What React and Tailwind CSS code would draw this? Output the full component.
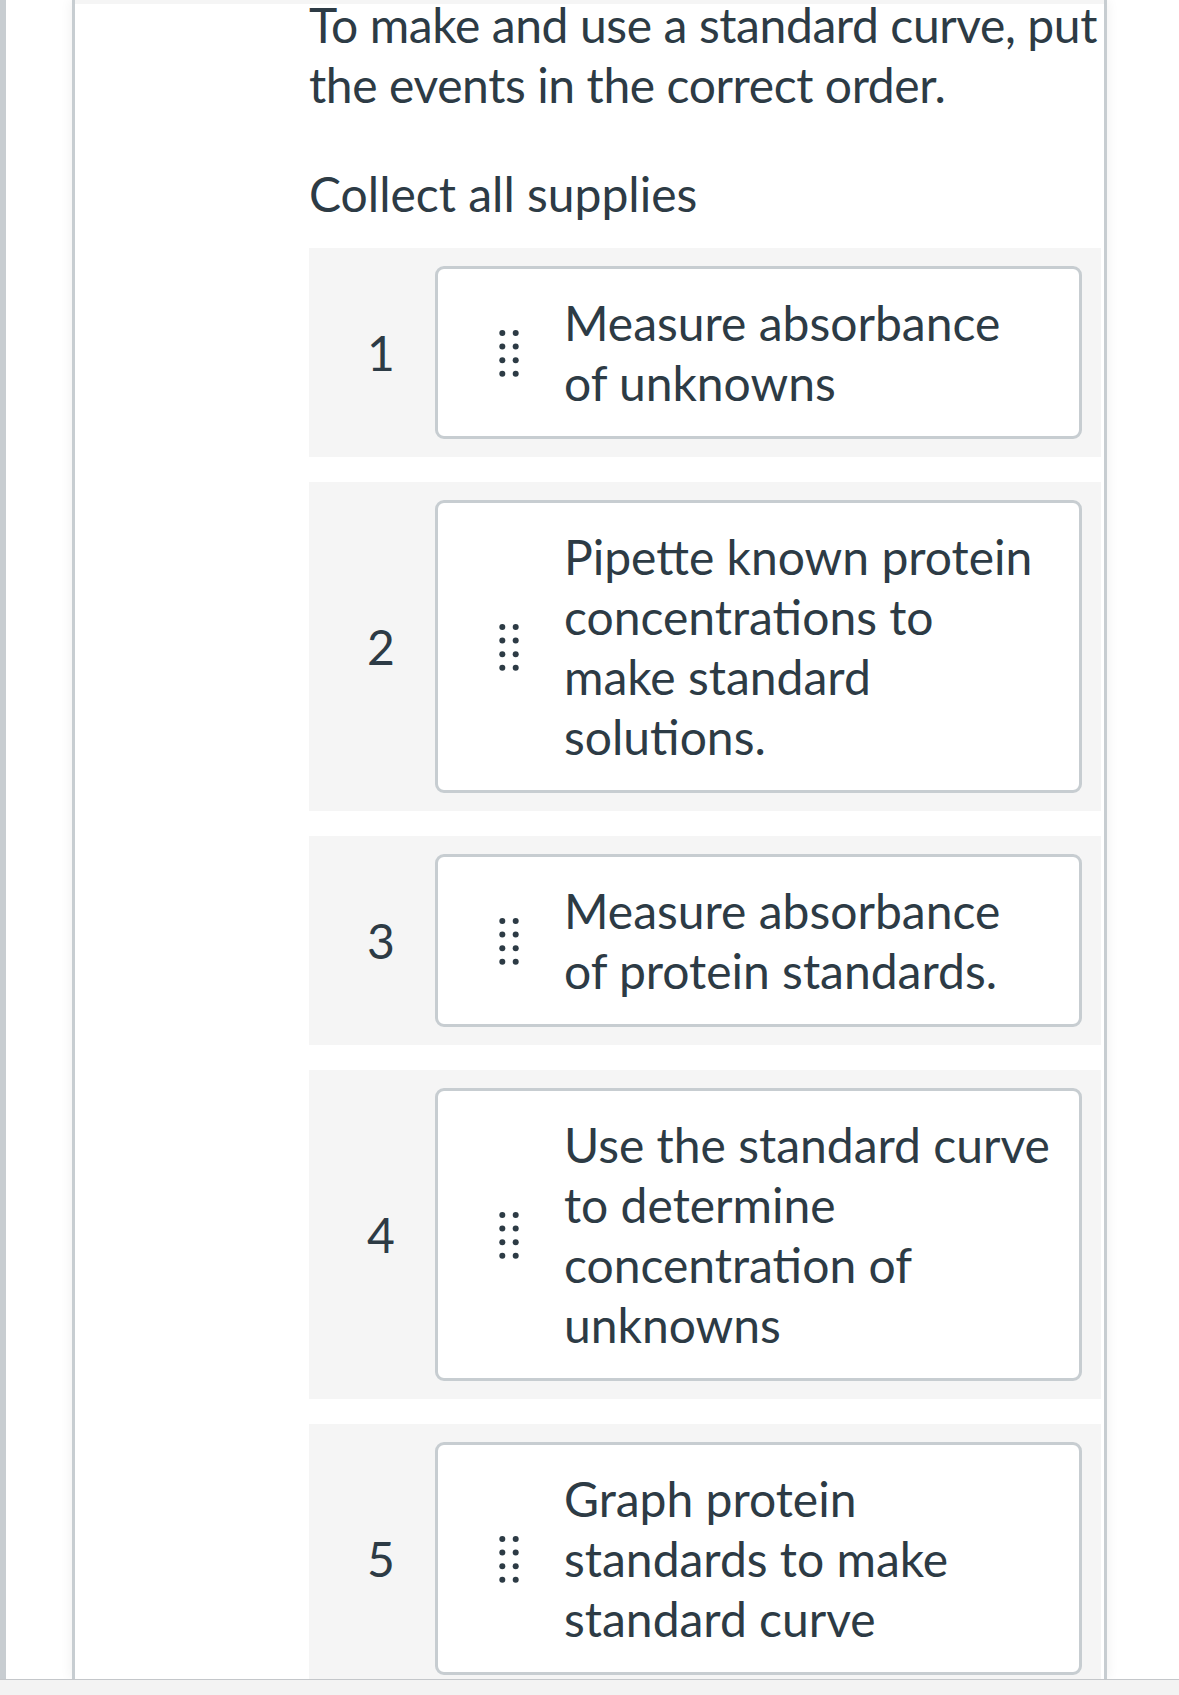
import React from 'react';

const steps = [
  'Measure absorbance of unknowns',
  'Pipette known protein concentrations to make standard solutions.',
  'Measure absorbance of protein standards.',
  'Use the standard curve to determine concentration of unknowns',
  'Graph protein standards to make standard curve',
];

const DragHandle = () => (
  <svg width="20" height="48" viewBox="0 0 20 48" className="shrink-0">
    {[0, 1, 2, 3].map((r) => (
      <g key={r}>
        <circle cx="3.3" cy={4 + r * 13.6} r="3" fill="#2d3b45" />
        <circle cx="16.7" cy={4 + r * 13.6} r="3" fill="#2d3b45" />
      </g>
    ))}
  </svg>
);

const StepRow = ({ index, text }) => (
  <div className="flex items-stretch bg-[#f5f5f5] pl-[18px] pr-[19px] py-[18px]">
    <div className="w-[108px] flex items-center justify-center text-[48px] leading-[60px]">
      {index}
    </div>
    <div className="flex-1 flex items-center border-[3px] border-[#c7cdd1] rounded-[9px] bg-white pl-[61px] pr-[26px] py-[23.5px]">
      <DragHandle />
      <p className="ml-[45px] flex-1 text-[48px] leading-[60px]">{text}</p>
    </div>
  </div>
);

export default function App() {
  return (
    <div
      className="w-[1179px] h-[1695px] bg-white flex flex-col overflow-hidden text-[#2d3b45]"
      style={{ fontFamily: 'Lato, "Noto Sans", sans-serif' }}
    >
      <div className="flex h-[1679px] overflow-hidden">
        <div className="w-[6px] bg-[#c8cdd1]" />
        <div className="w-[66px]" />
        <div className="w-[1035px] border-x-[3px] border-[#c7cdd1] shadow-[0_0_12px_rgba(0,0,0,0.07)] flex flex-col">
          <div className="h-[4px] bg-[#f5f5f5] shrink-0" />
          <div className="pl-[234px] pr-[3px]">
            <p className="-mt-[9px] tracking-[-0.4px] text-[48px] leading-[59.5px]">
              To make and use a standard curve, put the events in the correct order.
            </p>
            <p className="mt-[50px] text-[48px] leading-[60px]">Collect all supplies</p>
            <div className="mt-[24px] flex flex-col gap-[25px]">
              {steps.map((s, i) => (
                <StepRow key={i} index={i + 1} text={s} />
              ))}
            </div>
          </div>
        </div>
      </div>
      <div className="flex-1 border-t border-[#c4c7ca] bg-[#f3f3f3]" />
    </div>
  );
}
